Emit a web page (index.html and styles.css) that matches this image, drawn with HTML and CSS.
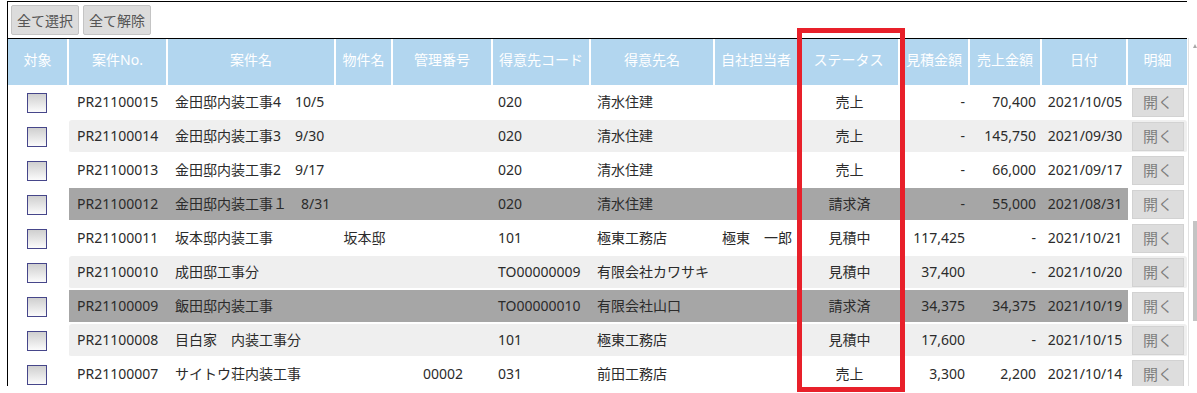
FILE: index.html
```html
<!DOCTYPE html>
<html lang="ja">
<head>
<meta charset="utf-8">
<title>案件一覧</title>
<link rel="stylesheet" href="styles.css">
</head>
<body>
<div class="page">
  <div class="frame">
    <div class="toolbar">
      <button class="tbtn">全て選択</button>
      <button class="tbtn">全て解除</button>
    </div>
    <div class="viewport">
      <table class="list">
        <thead>
          <tr>
            <th class="w1">対象</th>
            <th class="w2">案件No.</th>
            <th class="w3">案件名</th>
            <th class="w4">物件名</th>
            <th class="w5">管理番号</th>
            <th class="w6">得意先コード</th>
            <th class="w7">得意先名</th>
            <th class="w8">自社担当者</th>
            <th class="w9">ステータス</th>
            <th class="w10">見積金額</th>
            <th class="w11">売上金額</th>
            <th class="w12">日付</th>
            <th class="w13">明細</th>
          </tr>
        </thead>
        <tbody>
          <tr>
            <td class="c1"><span class="chk"></span></td>
            <td class="c2">PR21100015</td><td class="c3">金田邸内装工事4　10/5</td><td class="c4"></td><td class="c5"></td>
            <td class="c6">020</td><td class="c7">清水住建</td><td class="c8"></td><td class="c9">売上</td>
            <td class="c10">-</td><td class="c11">70,400</td><td class="c12">2021/10/05</td>
            <td class="c13"><button class="open">開く</button></td>
          </tr>
          <tr class="alt">
            <td class="c1"><span class="chk"></span></td>
            <td class="c2">PR21100014</td><td class="c3">金田邸内装工事3　9/30</td><td class="c4"></td><td class="c5"></td>
            <td class="c6">020</td><td class="c7">清水住建</td><td class="c8"></td><td class="c9">売上</td>
            <td class="c10">-</td><td class="c11">145,750</td><td class="c12">2021/09/30</td>
            <td class="c13"><button class="open">開く</button></td>
          </tr>
          <tr>
            <td class="c1"><span class="chk"></span></td>
            <td class="c2">PR21100013</td><td class="c3">金田邸内装工事2　9/17</td><td class="c4"></td><td class="c5"></td>
            <td class="c6">020</td><td class="c7">清水住建</td><td class="c8"></td><td class="c9">売上</td>
            <td class="c10">-</td><td class="c11">66,000</td><td class="c12">2021/09/17</td>
            <td class="c13"><button class="open">開く</button></td>
          </tr>
          <tr class="billed">
            <td class="c1"><span class="chk"></span></td>
            <td class="c2">PR21100012</td><td class="c3">金田邸内装工事１　8/31</td><td class="c4"></td><td class="c5"></td>
            <td class="c6">020</td><td class="c7">清水住建</td><td class="c8"></td><td class="c9">請求済</td>
            <td class="c10">-</td><td class="c11">55,000</td><td class="c12">2021/08/31</td>
            <td class="c13"><button class="open">開く</button></td>
          </tr>
          <tr>
            <td class="c1"><span class="chk"></span></td>
            <td class="c2">PR21100011</td><td class="c3">坂本邸内装工事</td><td class="c4">坂本邸</td><td class="c5"></td>
            <td class="c6">101</td><td class="c7">極東工務店</td><td class="c8">極東　一郎</td><td class="c9">見積中</td>
            <td class="c10">117,425</td><td class="c11">-</td><td class="c12">2021/10/21</td>
            <td class="c13"><button class="open">開く</button></td>
          </tr>
          <tr class="alt">
            <td class="c1"><span class="chk"></span></td>
            <td class="c2">PR21100010</td><td class="c3">成田邸工事分</td><td class="c4"></td><td class="c5"></td>
            <td class="c6">TO00000009</td><td class="c7">有限会社カワサキ</td><td class="c8"></td><td class="c9">見積中</td>
            <td class="c10">37,400</td><td class="c11">-</td><td class="c12">2021/10/20</td>
            <td class="c13"><button class="open">開く</button></td>
          </tr>
          <tr class="billed">
            <td class="c1"><span class="chk"></span></td>
            <td class="c2">PR21100009</td><td class="c3">飯田邸内装工事</td><td class="c4"></td><td class="c5"></td>
            <td class="c6">TO00000010</td><td class="c7">有限会社山口</td><td class="c8"></td><td class="c9">請求済</td>
            <td class="c10">34,375</td><td class="c11">34,375</td><td class="c12">2021/10/19</td>
            <td class="c13"><button class="open">開く</button></td>
          </tr>
          <tr class="alt">
            <td class="c1"><span class="chk"></span></td>
            <td class="c2">PR21100008</td><td class="c3">目白家　内装工事分</td><td class="c4"></td><td class="c5"></td>
            <td class="c6">101</td><td class="c7">極東工務店</td><td class="c8"></td><td class="c9">見積中</td>
            <td class="c10">17,600</td><td class="c11">-</td><td class="c12">2021/10/15</td>
            <td class="c13"><button class="open">開く</button></td>
          </tr>
          <tr>
            <td class="c1"><span class="chk"></span></td>
            <td class="c2">PR21100007</td><td class="c3">サイトウ荘内装工事</td><td class="c4"></td><td class="c5">00002</td>
            <td class="c6">031</td><td class="c7">前田工務店</td><td class="c8"></td><td class="c9">売上</td>
            <td class="c10">3,300</td><td class="c11">2,200</td><td class="c12">2021/10/14</td>
            <td class="c13"><button class="open">開く</button></td>
          </tr>
        </tbody>
      </table>
    </div>
  </div>
  <div class="vscroll">
    <span class="arrow"></span>
    <span class="thumb"></span>
  </div>
</div>
<div class="highlight"></div>
</body>
</html>
```

FILE: styles.css
```css
html, body {
  margin: 0;
  padding: 0;
  background: #ffffff;
}

body {
  width: 1197px;
  height: 393px;
  overflow: hidden;
  position: relative;
  font-family: "Noto Sans", "Noto Sans CJK JP", sans-serif;
  font-size: 14px;
  color: #2b2b2b;
}

.page {
  display: flex;
  align-items: flex-start;
  padding: 1px 0 0 7px;
}

.frame {
  width: 1180px;
  height: 384px;
  border-left: 1px solid #000;
  border-top: 1px solid #000;
  overflow: hidden;
  display: flex;
  flex-direction: column;
}

.toolbar {
  display: flex;
  gap: 4px;
  padding: 3px 3px;
  height: 30px;
  border-bottom: 1px solid #000;
  width: 1181px;
}

.tbtn {
  width: 68px;
  height: 30px;
  padding: 0;
  border: 1px solid #c4c4c4;
  border-radius: 2px;
  background: #dcdcdc;
  color: #555;
  font-family: "Noto Sans CJK JP", sans-serif;
  font-size: 14px;
  line-height: 20px;
}

.viewport {
  flex: 1;
  overflow: hidden;
}

.list {
  width: 1179px;
  table-layout: fixed;
  border-collapse: separate;
  border-spacing: 0;
}

.list th {
  box-sizing: border-box;
  height: 47px;
  padding: 0 0 4px;
  background: #b2d6ef;
  background-clip: padding-box;
  color: #ffffff;
  font-weight: normal;
  font-size: 14px;
  line-height: 20px;
  text-align: center;
  white-space: nowrap;
  border-right: 2px solid #ffffff;
  border-bottom: 1px solid #ffffff;
}

.list th.w13 { border-right: 0; }

.w1 { width: 61px; }
.w2 { width: 99px; }
.w3 { width: 168px; }
.w4 { width: 57px; }
.w5 { width: 100px; }
.w6 { width: 98px; }
.w7 { width: 124px; }
.w8 { width: 84px; }
.w9 { width: 101px; }
.w10 { width: 70px; }
.w11 { width: 72px; }
.w12 { width: 86px; }
.w13 { width: 59px; }

.list td {
  height: 32px;
  padding: 0;
  line-height: 20px;
  white-space: nowrap;
  overflow: hidden;
  border-bottom: 2px solid #ffffff;
  vertical-align: middle;
}

.alt td { background: #efefef; }
.alt td.c2 { border-radius: 3px 0 0 3px; }
.alt td.c13 { border-radius: 0 3px 3px 0; }

.billed td { background: #a6a6a6; }
.billed td.c13 { background: #ffffff; }

.list td.c1 { background: #ffffff; text-align: center; padding-right: 4px; }
.c2 { padding-left: 8px !important; }
.c3 { padding-left: 7px !important; }
.c4 { text-align: center; }
.c5 { text-align: center; }
.c6 { padding-left: 5px !important; }
.c7 { padding-left: 6px !important; }
.c8 { text-align: center; }
.c9 { text-align: center; }
.c10 { text-align: right; padding-right: 5px !important; }
.c11 { text-align: right; padding-right: 6px !important; }
.c12 { text-align: center; }
.c13 { padding-left: 4px !important; }

.chk {
  display: inline-block;
  vertical-align: middle;
  width: 18px;
  height: 18px;
  border: 1px solid #46468a;
  background: linear-gradient(#cfcfcf, #fbfbfb);
}

.open {
  display: block;
  width: 52px;
  height: 29px;
  padding: 0;
  border: 1px solid #d2d2d2;
  background: #dddddd;
  color: #7d7d7d;
  font-family: "Noto Sans CJK JP", sans-serif;
  font-size: 15px;
  line-height: 20px;
}

.vscroll {
  margin-left: 1px;
  margin-top: 37px;
  height: 348px;
  width: 8px;
  border-left: 1px solid #e2e2e2;
  display: flex;
  flex-direction: column;
  align-items: flex-end;
}

.arrow {
  margin-top: 6px;
  width: 0;
  height: 0;
  border-left: 2px solid transparent;
  border-right: 2px solid transparent;
  border-bottom: 4px solid #a8a8a8;
}

.thumb {
  margin-top: 173px;
  width: 4px;
  height: 100px;
  background: #c4c4c4;
}

.highlight {
  position: absolute;
  left: 797px;
  top: 28px;
  width: 108px;
  height: 364px;
  box-sizing: border-box;
  border: 5px solid #e8202a;
}
```
